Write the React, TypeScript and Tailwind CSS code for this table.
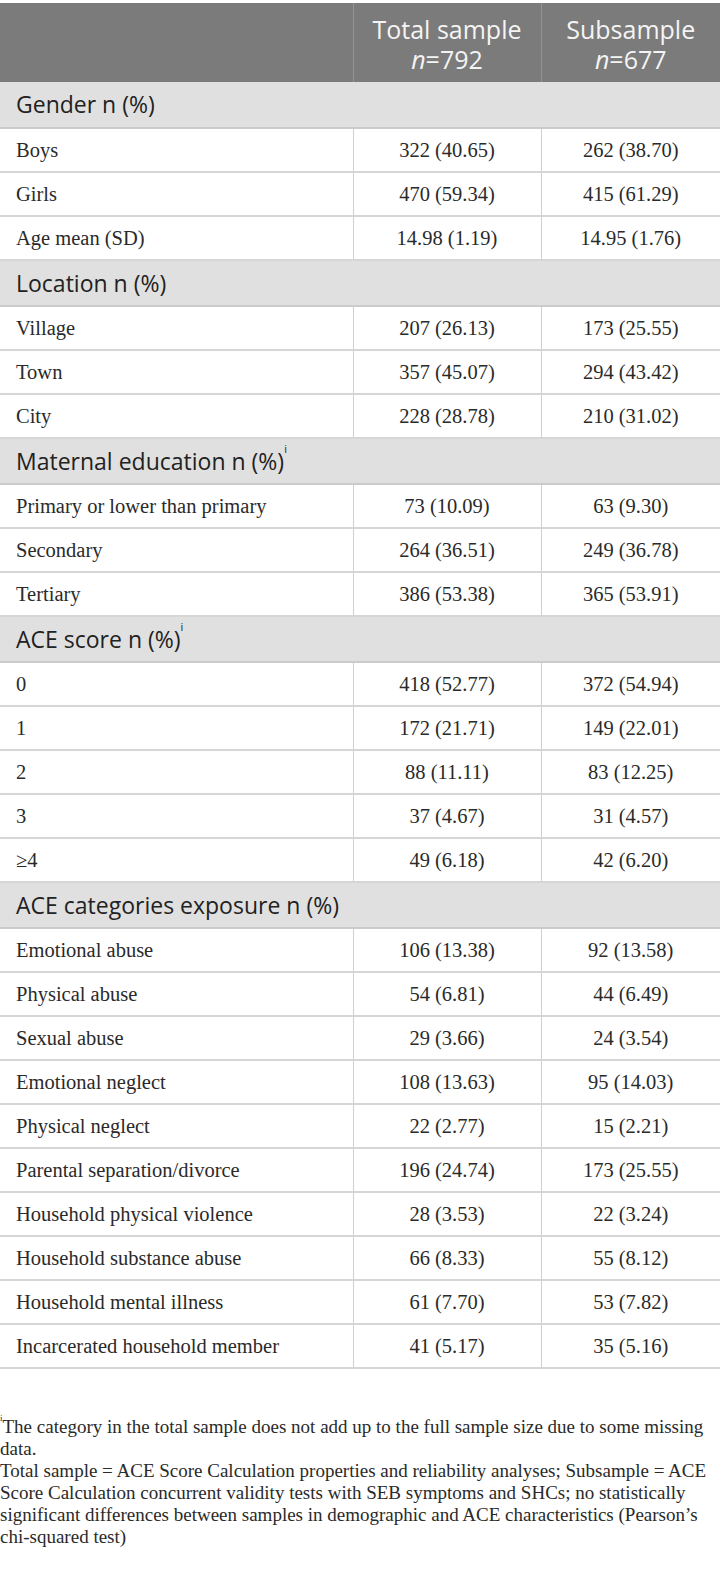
const sections: { title: string; note?: boolean; rows: [string, string, string][] }[] = [
  {
    title: "Gender n (%)",
    rows: [
      ["Boys", "322 (40.65)", "262 (38.70)"],
      ["Girls", "470 (59.34)", "415 (61.29)"],
      ["Age mean (SD)", "14.98 (1.19)", "14.95 (1.76)"],
    ],
  },
  {
    title: "Location n (%)",
    rows: [
      ["Village", "207 (26.13)", "173 (25.55)"],
      ["Town", "357 (45.07)", "294 (43.42)"],
      ["City", "228 (28.78)", "210 (31.02)"],
    ],
  },
  {
    title: "Maternal education n (%)",
    note: true,
    rows: [
      ["Primary or lower than primary", "73 (10.09)", "63 (9.30)"],
      ["Secondary", "264 (36.51)", "249 (36.78)"],
      ["Tertiary", "386 (53.38)", "365 (53.91)"],
    ],
  },
  {
    title: "ACE score n (%)",
    note: true,
    rows: [
      ["0", "418 (52.77)", "372 (54.94)"],
      ["1", "172 (21.71)", "149 (22.01)"],
      ["2", "88 (11.11)", "83 (12.25)"],
      ["3", "37 (4.67)", "31 (4.57)"],
      ["≥4", "49 (6.18)", "42 (6.20)"],
    ],
  },
  {
    title: "ACE categories exposure n (%)",
    rows: [
      ["Emotional abuse", "106 (13.38)", "92 (13.58)"],
      ["Physical abuse", "54 (6.81)", "44 (6.49)"],
      ["Sexual abuse", "29 (3.66)", "24 (3.54)"],
      ["Emotional neglect", "108 (13.63)", "95 (14.03)"],
      ["Physical neglect", "22 (2.77)", "15 (2.21)"],
      ["Parental separation/divorce", "196 (24.74)", "173 (25.55)"],
      ["Household physical violence", "28 (3.53)", "22 (3.24)"],
      ["Household substance abuse", "66 (8.33)", "55 (8.12)"],
      ["Household mental illness", "61 (7.70)", "53 (7.82)"],
      ["Incarcerated household member", "41 (5.17)", "35 (5.16)"],
    ],
  },
];

const sans = "font-['Open_Sans',sans-serif]";
const serif = "font-['Liberation_Serif',serif]";

export default function App() {
  return (
    <div className="w-[720px] bg-white pt-[3px]">
      <table className="w-full border-collapse table-fixed">
        <colgroup>
          <col className="w-[353px]" />
          <col className="w-[188px]" />
          <col className="w-[179px]" />
        </colgroup>
        <thead>
          <tr className={`h-[79px] bg-[#7b7b7b] text-[#f4f4f4] ${sans} text-[25px] leading-[30px]`}>
            <th />
            <th className="border-l border-[#939393] pt-[2px] text-center font-normal">
              Total sample
              <br />
              <i>n</i>=792
            </th>
            <th className="border-l border-[#939393] pt-[2px] text-center font-normal">
              Subsample
              <br />
              <i>n</i>=677
            </th>
          </tr>
        </thead>
        <tbody>
          {sections.map((s) => (
            <>
              <tr key={s.title} className="h-[46px] bg-[#e1e0e0] border-b-2 border-[#cbcbcb]">
                <td colSpan={3} className={`px-4 ${sans} text-[23px] text-[#222]`}>
                  {s.title}
                  {s.note && <sup className="text-[11px] align-[11px]">i</sup>}
                </td>
              </tr>
              {s.rows.map((r) => (
                <tr key={r[0]} className={`h-[44px] border-b-2 border-[#d6d6d6] ${serif} text-[20.5px] text-[#2a2a2a]`}>
                  <td className="px-4">{r[0]}</td>
                  <td className="border-l border-[#cfcfcf] text-center">{r[1]}</td>
                  <td className="border-l border-[#cfcfcf] text-center">{r[2]}</td>
                </tr>
              ))}
            </>
          ))}
        </tbody>
      </table>
      <div className={`mt-[47px] whitespace-nowrap ${serif} text-[19px] leading-[22px] text-[#2a2a2a]`}>
        <p>
          <sup className="text-[9px] align-[8px]">i</sup>The category in the total sample does not add up to the full sample size due to some missing
          <br />
          data.
        </p>
        <p>
          Total sample = ACE Score Calculation properties and reliability analyses; Subsample = ACE
          <br />
          Score Calculation concurrent validity tests with SEB symptoms and SHCs; no statistically
          <br />
          significant differences between samples in demographic and ACE characteristics (Pearson’s
          <br />
          chi-squared test)
        </p>
      </div>
    </div>
  );
}
